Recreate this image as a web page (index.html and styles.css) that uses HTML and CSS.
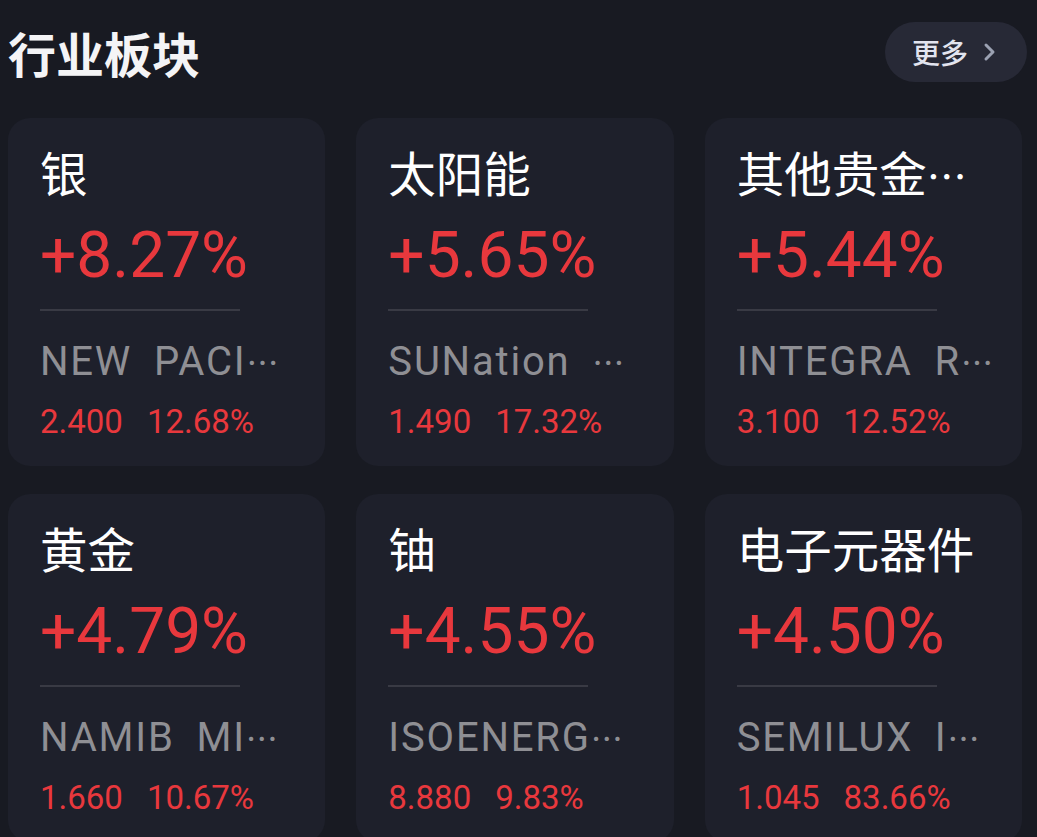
FILE: index.html
```html
<!DOCTYPE html>
<html lang="zh-CN">
<head>
    <meta charset="UTF-8">
    <meta name="viewport" content="width=device-width, initial-scale=1.0">
    <title>行业板块</title>
    <link rel="stylesheet" href="styles.css">
</head>
<body>

<div class="sector-page">

    <div class="sector-header">
        <h1 class="sector-title">行业板块</h1>
        <button type="button" class="more-button">
            <span>更多</span>
            <svg width="14" height="20" viewBox="0 0 14 20">
                <path d="M3 3 L10 10 L3 17" fill="none" stroke="#9ba1b2" stroke-width="3" stroke-linecap="round" stroke-linejoin="round"/>
            </svg>
        </button>
    </div>

    <div class="sector-grid">

        <div class="sector-card">
            <div class="sector-name">银</div>
            <div class="sector-change">+8.27%</div>
            <div class="divider"></div>
            <div class="stock-name">NEW PACI<span class="dots">…</span></div>
            <div class="stock-row"><span>2.400</span><span>12.68%</span></div>
        </div>

        <div class="sector-card">
            <div class="sector-name">太阳能</div>
            <div class="sector-change">+5.65%</div>
            <div class="divider"></div>
            <div class="stock-name">SUNation <span class="dots">…</span></div>
            <div class="stock-row"><span>1.490</span><span>17.32%</span></div>
        </div>

        <div class="sector-card">
            <div class="sector-name">其他贵金<span class="name-dots">…</span></div>
            <div class="sector-change">+5.44%</div>
            <div class="divider"></div>
            <div class="stock-name">INTEGRA R<span class="dots">…</span></div>
            <div class="stock-row"><span>3.100</span><span>12.52%</span></div>
        </div>

        <div class="sector-card">
            <div class="sector-name">黄金</div>
            <div class="sector-change">+4.79%</div>
            <div class="divider"></div>
            <div class="stock-name">NAMIB MI<span class="dots">…</span></div>
            <div class="stock-row"><span>1.660</span><span>10.67%</span></div>
        </div>

        <div class="sector-card">
            <div class="sector-name">铀</div>
            <div class="sector-change">+4.55%</div>
            <div class="divider"></div>
            <div class="stock-name">ISOENERG<span class="dots">…</span></div>
            <div class="stock-row"><span>8.880</span><span>9.83%</span></div>
        </div>

        <div class="sector-card">
            <div class="sector-name">电子元器件</div>
            <div class="sector-change">+4.50%</div>
            <div class="divider"></div>
            <div class="stock-name">SEMILUX I<span class="dots">…</span></div>
            <div class="stock-row"><span>1.045</span><span>83.66%</span></div>
        </div>

    </div>

</div>

</body>
</html>
```

FILE: styles.css
```css
body {
    margin: 0;
    background-color: #181a22;
    font-family: Roboto, "Noto Sans CJK SC", sans-serif;
    width: 1037px;
    height: 837px;
    overflow: hidden;
}

.sector-page {
    padding: 22px 15px 0 8px;
}

.sector-header {
    display: flex;
    justify-content: space-between;
    align-items: center;
    height: 60px;
    margin-right: -5px;
}

.sector-title {
    margin: 0;
    font-family: "Noto Sans CJK SC", sans-serif;
    font-size: 48px;
    font-weight: 700;
    line-height: 56px;
    color: #f4f4f6;
}

.more-button {
    display: flex;
    align-items: center;
    gap: 15px;
    height: 60px;
    padding: 0 30px 0 27px;
    border: none;
    border-radius: 30px;
    background-color: #272936;
    color: #e2e4ef;
    font-family: "Noto Sans CJK SC", sans-serif;
    font-size: 28px;
    font-weight: 500;
    cursor: pointer;
}

.sector-grid {
    display: grid;
    grid-template-columns: repeat(3, 1fr);
    column-gap: 31px;
    row-gap: 28px;
    margin-top: 36px;
}

.sector-card {
    background-color: #1e202b;
    border-radius: 22px;
    padding: 28px 16px 24px 32px;
    height: 348px;
    box-sizing: border-box;
}

.sector-name {
    height: 52px;
    font-family: "Noto Sans CJK SC", sans-serif;
    font-size: 47.5px;
    line-height: 52px;
    color: #ffffff;
    white-space: nowrap;
}

.name-dots {
    font-size: 40px;
    line-height: 1;
}

.sector-change {
    margin-top: 22px;
    font-size: 64px;
    line-height: 72px;
    color: #e8383d;
}

.divider {
    margin-top: 17px;
    width: 200px;
    height: 2px;
    background-color: #393a44;
}

.stock-name {
    height: 48px;
    margin-top: 27px;
    font-size: 40px;
    line-height: 48px;
    letter-spacing: 1.8px;
    word-spacing: 10px;
    color: #8f8f94;
    white-space: nowrap;
}

.dots {
    font-family: "Noto Sans CJK SC", sans-serif;
    font-size: 32px;
    line-height: 1;
    letter-spacing: 0;
}

.stock-row {
    display: flex;
    gap: 24px;
    margin-top: 16px;
    font-size: 33px;
    line-height: 40px;
    color: #e8383d;
}
```
